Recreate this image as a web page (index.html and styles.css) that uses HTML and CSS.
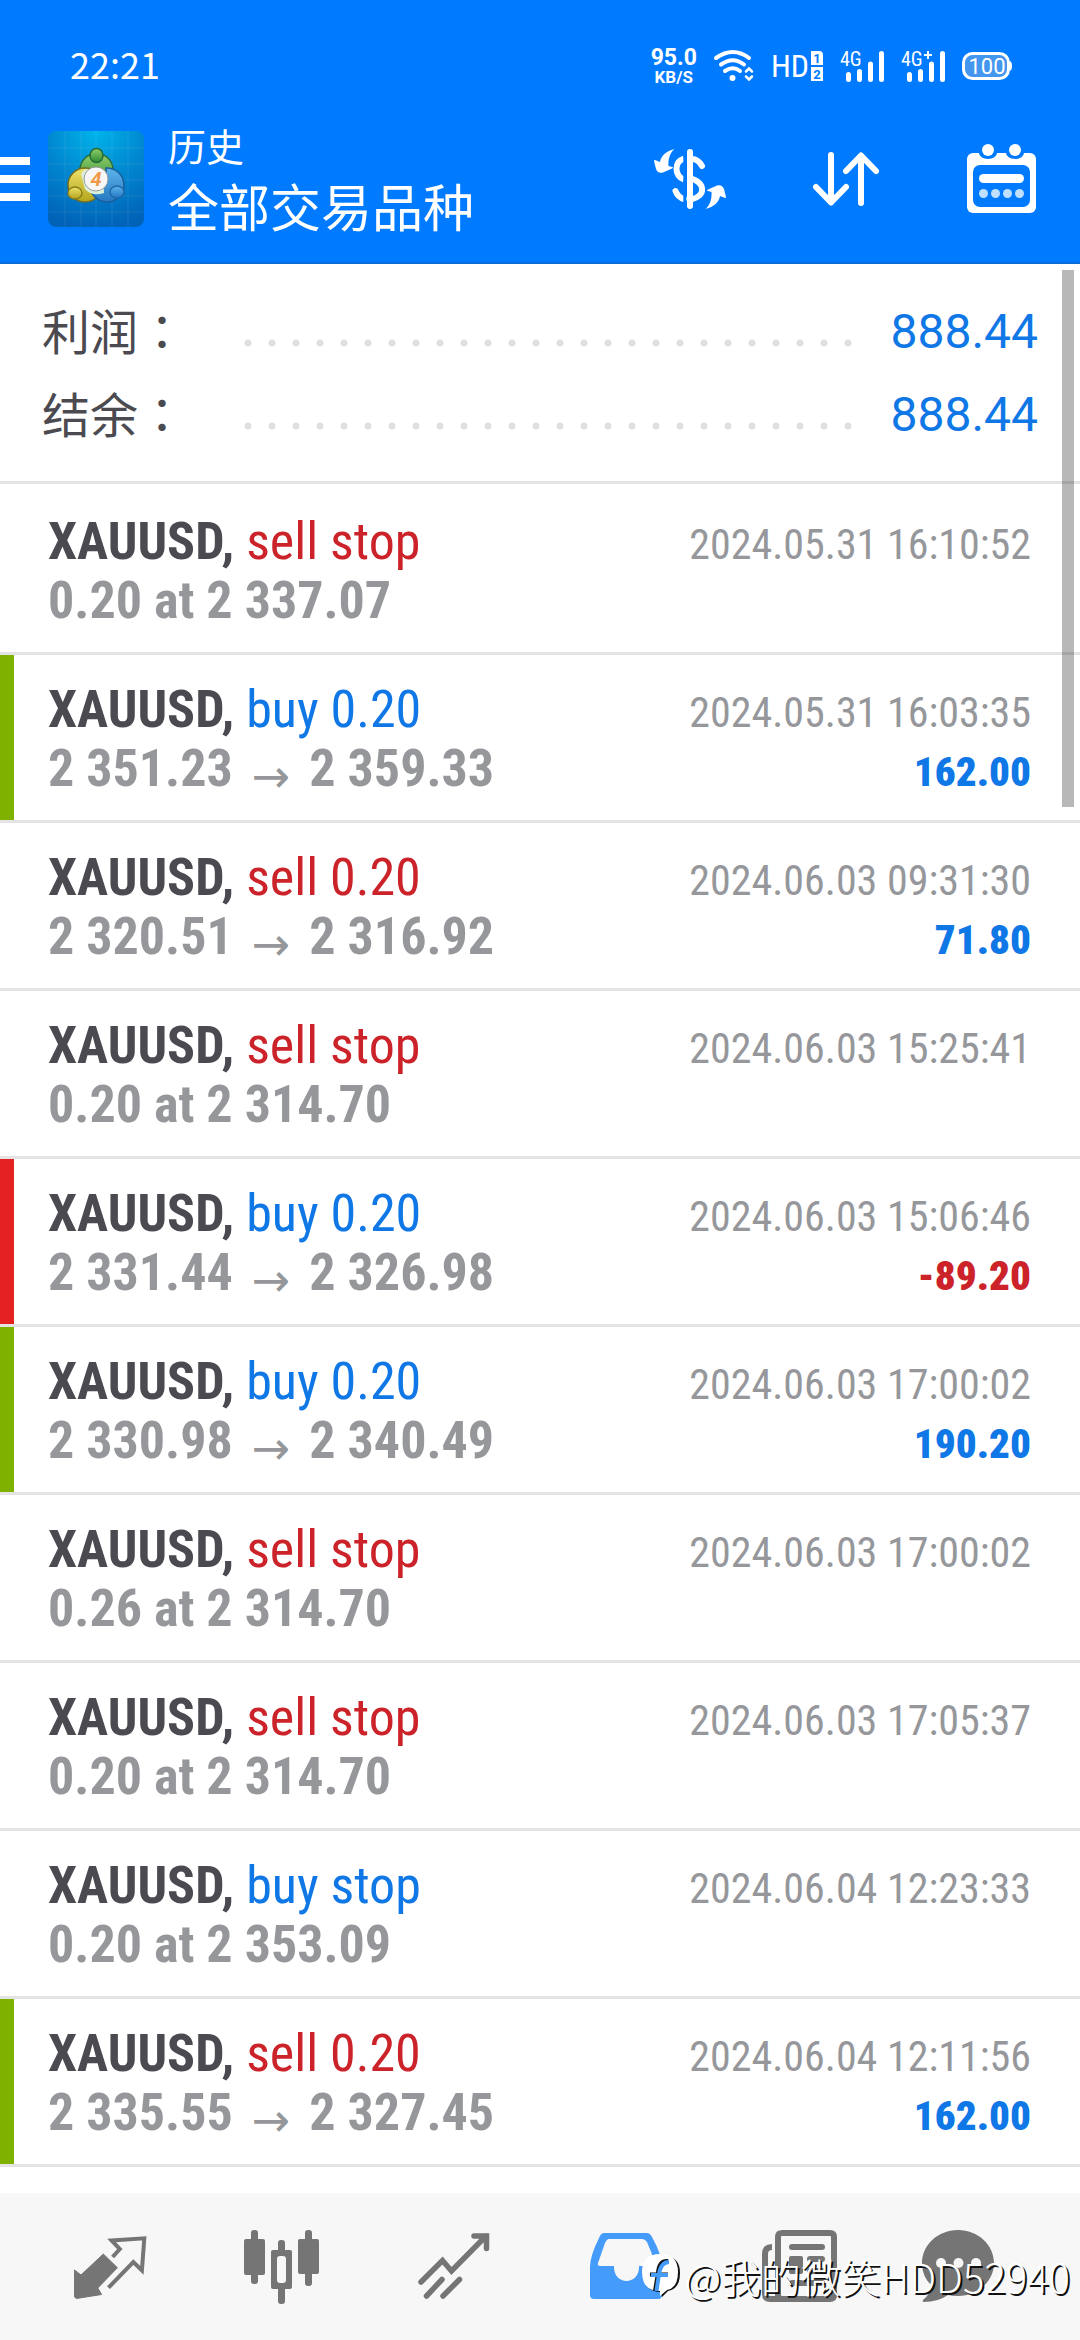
FILE: index.html
```html
<!DOCTYPE html>
<html lang="zh-CN">
<head>
<meta charset="utf-8">
<meta name="viewport" content="width=device-width, initial-scale=1">
<title>历史</title>
<link rel="stylesheet" href="styles.css">
</head>
<body>
<header class="top">
  <div class="status">
    <span class="clock">22:21</span>
    <div class="status-icons">
      <span class="speed"><b>95.0</b><small>KB/S</small></span>
      <svg width="40" height="32" viewBox="0 0 40 32" fill="none" stroke="#fff" stroke-width="4" stroke-linecap="round">
        <path d="M2 8Q19 -4 35 8M7 14.500Q19 6 30 14.500M11 21Q19 15.500 26 21"/>
        <circle cx="18.500" cy="28" r="3" fill="#fff" stroke="none"/>
        <path d="M32 21.500L35 18.500L38 21.500M32 26.500L35 29.500L38 26.500" stroke-width="2.500"/>
      </svg>
      <span class="hd">HD<svg width="12" height="30" viewBox="0 0 12 30">
        <path d="M0 0H8Q12 0 12 4V14H0ZM0 16H12V30H0Z" fill="#fff"/>
        <text class="sim" x="6" y="12">1</text><text class="sim" x="6" y="28">2</text>
      </svg></span>
      <svg width="44" height="31" viewBox="0 0 44 31">
        <text class="net" x="0" y="15">4G</text>
        <path d="M8.500 23.500V28.500M19.500 20.500V28.500M30.500 13V28.500M41.500 2.500V28.500" stroke="#fff" stroke-width="5" stroke-linecap="round"/>
      </svg>
      <svg width="44" height="31" viewBox="0 0 44 31">
        <text class="net" x="0" y="15">4G</text>
        <path d="M23 4H31M27 0V8" stroke="#fff" stroke-width="2"/>
        <path d="M8.500 23.500V28.500M19.500 20.500V28.500M30.500 13V28.500M41.500 2.500V28.500" stroke="#fff" stroke-width="5" stroke-linecap="round"/>
      </svg>
      <svg width="50" height="28" viewBox="0 0 50 28">
        <rect x="1.500" y="1.500" width="45" height="25" rx="9" fill="#4596ef" stroke="#fff" stroke-width="3"/>
        <path d="M48 9Q50 10 50 14T48 19Z" fill="#fff"/>
        <text class="charge" x="25" y="22">100</text>
      </svg>
    </div>
  </div>
  <div class="appbar">
    <button class="menu" aria-label="菜单"><i></i><i></i><i></i></button>
    <svg class="logo" width="96" height="96" viewBox="0 0 96 96">
      <defs>
        <radialGradient id="sky" cx=".5" cy="0" r="1"><stop offset="0" stop-color="#00b4ea"/><stop offset=".5" stop-color="#0088d0"/><stop offset="1" stop-color="#0063b8"/></radialGradient>
        <linearGradient id="gr" x2="0" y2="1"><stop offset="0" stop-color="#8fcf6a"/><stop offset="1" stop-color="#2f8a35"/></linearGradient>
        <linearGradient id="ye" x2="0" y2="1"><stop offset="0" stop-color="#eee26a"/><stop offset="1" stop-color="#b3a41c"/></linearGradient>
        <linearGradient id="bl" x2="0" y2="1"><stop offset="0" stop-color="#5db4ea"/><stop offset="1" stop-color="#2478c2"/></linearGradient>
      </defs>
      <rect width="96" height="96" rx="8" fill="url(#sky)"/>
      <path d="M17 0V96M33 0V96M48 0V96M64 0V96M80 0V96M0 17H96M0 33H96M0 49H96M0 65H96M0 81H96" stroke="#fff" stroke-opacity=".09"/>
      <g stroke-width="1.500">
        <circle cx="48.500" cy="39" r="16.500" fill="url(#gr)" stroke="#2c6d3c"/>
        <circle cx="37" cy="54" r="17" fill="url(#ye)" stroke="#756c20"/>
        <path d="M58 37A17 17 0 1 1 43 60Q60 60 58 37Z" fill="url(#bl)" stroke="#1c5d9c"/>
        <path d="M33 43Q38 35 48 40Q56 47 56 62Q44 66 37 58Z" fill="#d9efdc" stroke="none"/>
        <ellipse cx="48.500" cy="24.500" rx="6.500" ry="7" fill="url(#gr)" stroke="#246b33"/>
        <ellipse cx="27" cy="62" rx="7" ry="6" fill="url(#ye)" stroke="#8a7e1a"/>
        <ellipse cx="69" cy="61" rx="7" ry="6" fill="url(#bl)" stroke="#1f66a8"/>
        <circle cx="48" cy="48" r="12" fill="#f7f7f7" stroke="#999" stroke-width="1"/>
      </g>
      <text class="four" x="48" y="55">4</text>
    </svg>
    <h1 class="title"><span class="page">历史</span><span class="scope">全部交易品种</span></h1>
    <button class="action" aria-label="货币">
      <svg width="72" height="60" viewBox="0 0 72 60">
        <g fill="none" stroke="#fff" stroke-width="6">
          <path d="M30 9.500C20 13 20 26 30 30.500"/><path d="M38 10Q44 10 48 17" stroke-linecap="round"/>
          <path d="M36 29C52 34 52 47 37 50.500"/><path d="M21.500 42Q24 48.500 30 50" stroke-linecap="round"/>
          <path d="M36 3V57" stroke-linecap="round"/>
        </g>
        <path d="M30.800 3V57" stroke="#007aff" stroke-width="3"/>
        <path id="swoosh" d="M20.500 0C12 2 7 7 6 13L1 11Q0 11 0 12L2 20Q4 25 9 23.500L18 19.500Q20 18.500 18 18L14.500 17C14 10 16 4 20.500 0Z" fill="#fff"/>
        <use href="#swoosh" transform="rotate(180 36 30)"/>
      </svg>
    </button>
    <button class="action" aria-label="排序">
      <svg width="66" height="54" viewBox="0 0 66 54" fill="none" stroke="#fff" stroke-width="6" stroke-linecap="round" stroke-linejoin="round">
        <path d="M18 3V50M3 35L18 50.500L33 35M48 51V4M33 19L48 3.500L63 19"/>
      </svg>
    </button>
    <button class="action" aria-label="日期">
      <svg width="70" height="70" viewBox="0 0 70 70">
        <rect y="9" width="69" height="60" rx="6" fill="#fff"/>
        <rect x="6" y="21" width="57" height="42" rx="7" fill="#007aff"/>
        <path d="M12 9a9 6 0 0 0 18 0ZM39 9a9 6 0 0 0 18 0Z" fill="#007aff"/>
        <g fill="#fff"><circle cx="21" cy="6" r="6"/><circle cx="48" cy="6" r="6"/><rect x="12" y="30" width="45" height="9" rx="4.500"/></g>
        <g fill="#bfe0ff"><circle cx="16.500" cy="49.500" r="4.500"/><circle cx="28.500" cy="49.500" r="4.500"/><circle cx="40.500" cy="49.500" r="4.500"/><circle cx="52.500" cy="49.500" r="4.500"/></g>
      </svg>
    </button>
  </div>
</header>

<main class="history">
  <dl class="summary">
    <div class="total"><dt>利润<span class="colon" lang="zh-TW">：</span></dt><dd>888.44</dd></div>
    <div class="total"><dt>结余<span class="colon" lang="zh-TW">：</span></dt><dd>888.44</dd></div>
  </dl>
  <ul class="deals">
    <li class="deal"><p class="name">XAUUSD, <span class="sell">sell stop</span></p><time>2024.05.31 16:10:52</time><p class="price">0.20 at 2 337.07</p></li>
    <li class="deal win"><p class="name">XAUUSD, <span class="buy">buy 0.20</span></p><time>2024.05.31 16:03:35</time><p class="price">2 351.23<span class="to">→</span>2 359.33</p><b class="profit">162.00</b></li>
    <li class="deal"><p class="name">XAUUSD, <span class="sell">sell 0.20</span></p><time>2024.06.03 09:31:30</time><p class="price">2 320.51<span class="to">→</span>2 316.92</p><b class="profit">71.80</b></li>
    <li class="deal"><p class="name">XAUUSD, <span class="sell">sell stop</span></p><time>2024.06.03 15:25:41</time><p class="price">0.20 at 2 314.70</p></li>
    <li class="deal loss"><p class="name">XAUUSD, <span class="buy">buy 0.20</span></p><time>2024.06.03 15:06:46</time><p class="price">2 331.44<span class="to">→</span>2 326.98</p><b class="profit">-89.20</b></li>
    <li class="deal win"><p class="name">XAUUSD, <span class="buy">buy 0.20</span></p><time>2024.06.03 17:00:02</time><p class="price">2 330.98<span class="to">→</span>2 340.49</p><b class="profit">190.20</b></li>
    <li class="deal"><p class="name">XAUUSD, <span class="sell">sell stop</span></p><time>2024.06.03 17:00:02</time><p class="price">0.26 at 2 314.70</p></li>
    <li class="deal"><p class="name">XAUUSD, <span class="sell">sell stop</span></p><time>2024.06.03 17:05:37</time><p class="price">0.20 at 2 314.70</p></li>
    <li class="deal"><p class="name">XAUUSD, <span class="buy">buy stop</span></p><time>2024.06.04 12:23:33</time><p class="price">0.20 at 2 353.09</p></li>
    <li class="deal win"><p class="name">XAUUSD, <span class="sell">sell 0.20</span></p><time>2024.06.04 12:11:56</time><p class="price">2 335.55<span class="to">→</span>2 327.45</p><b class="profit">162.00</b></li>
  </ul>
  <div class="scrollbar"></div>
</main>

<nav class="tabs">
  <a href="#quotes" aria-label="行情">
    <svg width="76" height="76" viewBox="-2 -7 76 76">
      <path d="M29.300 18L43.400 31.700L23.800 52L27.600 58.500L2.400 62.500L0.500 61V34L7 39Z" fill="#757575" stroke="#757575" stroke-linejoin="round"/>
      <path d="M38.600 21L45.800 13L37.600 4.500L70.300 2.300L67.900 34.300L59.300 26L34.500 51.700" fill="none" stroke="#757575" stroke-width="4"/>
    </svg>
  </a>
  <a href="#charts" aria-label="图表">
    <svg width="76" height="76" viewBox="0 0 76 76" fill="#757575">
      <rect x="7" y="1" width="7" height="54" rx="3"/><rect y="10" width="21" height="36" rx="2"/>
      <rect x="34" y="11" width="7" height="64" rx="3"/><rect x="27" y="21" width="21" height="39" rx="2"/><rect x="33" y="27" width="9" height="27" rx="3" fill="#f7f7f7"/>
      <rect x="61" y="1" width="7" height="56" rx="3"/><rect x="54" y="10" width="21" height="35" rx="2"/>
    </svg>
  </a>
  <a href="#trade" aria-label="交易">
    <svg width="76" height="76" viewBox="0 0 76 76" fill="none" stroke="#757575" stroke-width="5.500" stroke-linecap="round">
      <path d="M5 53L26.500 31.500L35.500 42L70 7M58 7H70.500V19.500" stroke-linejoin="miter"/>
      <path d="M10.500 67L26 50.500M27 67L43.500 50.500"/>
    </svg>
  </a>
  <a href="#history" aria-label="历史" aria-current="page">
    <svg width="76" height="76" viewBox="0 0 76 76">
      <path fill="#449bfa" fill-rule="evenodd" d="M16 4H59Q62 4 64 8Q74 26 74 38V66Q74 70 70 70H6Q2 70 2 66V38Q2 27 11 9Q13 4 16 4ZM21 10Q19 10 17 14L10 34Q9 37 12 37H26C25 57 52 57 51 37H65Q68 37 67 34Q63 22 59 13Q57 10 54 10Z"/>
    </svg>
  </a>
  <a href="#news" aria-label="新闻">
    <svg width="80" height="76" viewBox="-2 0 80 76" fill="none" stroke="#757575" stroke-width="6">
      <path d="M21 4H70Q74 4 74 8V66Q74 70 70 70H22Q18 70 18 66V8Q18 4 22 4"/>
      <path d="M12 18Q5 18 5 25V65Q5 70 10 70H22"/>
      <path d="M32 18H62M50 30H62M50 42H62M32 54H62" stroke-linecap="round"/>
      <rect x="29" y="27" width="14" height="18" rx="2" fill="#757575" stroke="none"/>
    </svg>
  </a>
  <a href="#chat" aria-label="聊天">
    <svg width="100" height="76" viewBox="0 0 100 76">
      <path d="M38 1C58 1 74 16 74 34S58 67 38 67Q32 67 28 66Q18 73 4 73Q2 73 3 71Q11 64 12 57Q2 48 2 34C2 16 18 1 38 1Z" fill="#757575"/>
      <g fill="#f7f7f7"><circle cx="21" cy="34" r="5"/><circle cx="38.500" cy="34" r="5"/><circle cx="56" cy="34" r="5"/></g>
    </svg>
  </a>
</nav>

<div class="mark">
  <svg width="40" height="44" viewBox="0 0 40 44">
    <path d="M2 19Q2 2 19 2Q38 1 38 19Q38 35 26 37L20 43L19 38Q2 38 2 19Z" fill="#111"/>
    <path d="M0 18Q0 0 18 0Q36 0 36 18Q36 34 25 36L18 42L18 37Q0 37 0 18Z" fill="#fff"/>
    <path d="M26 7Q17 6 16 19L13 37M8 20.500H26" fill="none" stroke="#111" stroke-width="4"/>
    <path d="M27 8Q19 8 17 20L14.500 37M9 21H26" fill="none" stroke="#449bfa" stroke-width="4"/>
  </svg>
  <span>@我的微笑HDD52940</span>
</div>
</body>
</html>
```
FILE: styles.css
```css
* { box-sizing: border-box; }

body {
  margin: 0;
  min-height: 100vh;
  display: flex;
  flex-direction: column;
  position: relative;
  background: #fff;
  color: #4a4a50;
  font-family: "Roboto Condensed", Roboto, "Noto Sans CJK SC", sans-serif;
}

button { margin: 0; padding: 0; border: 0; background: none; }
svg { display: block; flex: none; overflow: visible; }

/* Header */
.top { background: #007aff; color: #fff; border-bottom: 2px solid #0a6cd6; }

.status {
  display: flex;
  align-items: center;
  justify-content: space-between;
  height: 96px;
  padding: 36px 68px 0 70px;
}
.clock { padding-bottom: 6px; font: 36px/48px "Noto Sans CJK SC", sans-serif; }
.status-icons { display: flex; align-items: center; gap: 17px; }
.speed { display: flex; flex-direction: column; align-items: center; font-family: Roboto, sans-serif; }
.speed b { font-size: 23px; line-height: 22px; }
.speed small { font-size: 17px; line-height: 17px; font-weight: 700; }
.hd { display: flex; align-items: center; gap: 2px; font-size: 32px; line-height: 32px; }
.sim { font: 700 13px Roboto, sans-serif; fill: #007aff; text-anchor: middle; }
.net { font: 20px "Roboto Condensed", Roboto, sans-serif; fill: #fff; }
.charge { font: 22px Roboto, sans-serif; fill: #fff; text-anchor: middle; }

.appbar { display: flex; align-items: center; height: 166px; }
.menu { display: flex; flex-direction: column; gap: 10px; width: 30px; margin-right: 18px; }
.menu i { height: 8px; background: #fff; }
.four { font: italic 700 20px Roboto, sans-serif; fill: #f09a4a; text-anchor: middle; }
.title {
  flex: 1;
  display: flex;
  flex-direction: column;
  margin: 0 0 0 24px;
  padding-bottom: 8px;
  font-family: "Noto Sans CJK SC", sans-serif;
  font-weight: 400;
  line-height: 60px;
  white-space: nowrap;
}
.page { font-size: 38px; }
.scope { font-size: 51px; }
.action { display: flex; justify-content: center; width: 156px; }

/* Totals */
.history { position: relative; }
.summary { margin: 0; padding: 26px 42px 25px; border-bottom: 3px solid #e4e4e4; }
.total {
  display: flex;
  align-items: center;
  height: 83px;
  font: 48px/83px Roboto, "Noto Sans CJK SC", sans-serif;
}
.total::before {
  content: "";
  order: 1;
  flex: 1;
  height: 83px;
  margin: 0 28px 0 50px;
  background: radial-gradient(circle, #dfdfdf 3px, transparent 4px) 0 49px / 24px 8px repeat-x;
}
.colon { font-family: "Noto Sans CJK TC", sans-serif; }
.total dd { order: 2; margin: 0; color: #0f77e6; }

/* Deals */
.deals { margin: 0; padding: 3px 0 0; list-style: none; }
.deal {
  display: grid;
  grid-template-columns: 1fr auto;
  align-items: baseline;
  padding: 25px 49px 22px 48px;
  border-bottom: 3px solid #e4e4e4;
  font-size: 52px;
  line-height: 59px;
  font-weight: 700;
}
.win { box-shadow: inset 14px 0 #7fb200; }
.loss { box-shadow: inset 14px 0 #e52222; }
.deal p { margin: 0; }
.name span { font-weight: 400; }
.sell { color: #cc2229; }
.buy { color: #0f77e6; }
.price { color: #95979a; }
.to {
  margin: 0 19px;
  font: 46px/30px "DejaVu Sans", sans-serif;
  vertical-align: -6px;
}
.deal time { font-size: 42px; line-height: 44px; font-weight: 400; color: #95979a; }
.profit { font-size: 41px; line-height: 44px; text-align: right; color: #0f77e6; }
.loss .profit { color: #cc2229; }

.scrollbar {
  position: absolute;
  top: 6px;
  right: 6px;
  width: 12px;
  height: 537px;
  background: rgba(0, 0, 0, .28);
}

/* Bottom tabs */
.tabs {
  display: grid;
  grid-template-columns: repeat(6, 1fr);
  align-items: center;
  height: 147px;
  margin-top: auto;
  padding: 0 24px;
  background: #f7f7f7;
}
.tabs a { display: flex; justify-content: center; }

.mark {
  position: absolute;
  right: 10px;
  bottom: 36px;
  display: flex;
  align-items: center;
  gap: 2px;
  color: #fff;
  font: 40px/56px "Noto Sans CJK SC", sans-serif;
  font-weight: 300;
  text-shadow: 2px 2px 0 #111;
  white-space: nowrap;
}
```
